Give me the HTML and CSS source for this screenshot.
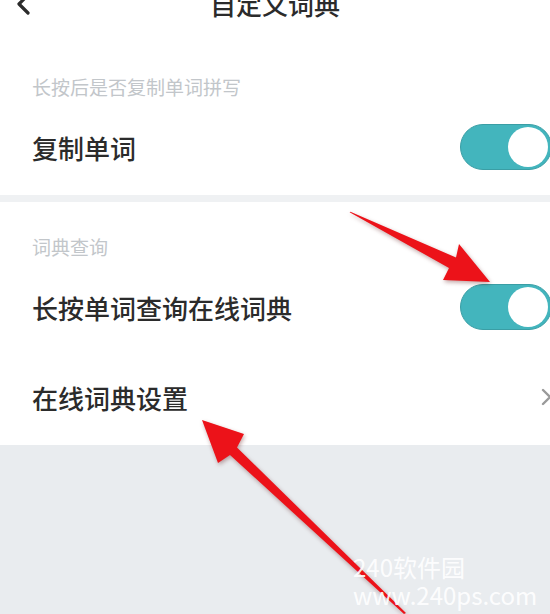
FILE: index.html
```html
<!DOCTYPE html>
<html lang="zh-CN">
<head>
    <meta charset="UTF-8">
    <meta name="viewport" content="width=device-width, initial-scale=1.0">
    <title>自定义词典</title>
    <link rel="stylesheet" href="styles.css">
</head>
<body>
    <div class="page">
        <!-- 顶部标题栏 -->
        <div class="topbar">
            <svg class="back" width="16" height="22" viewBox="0 0 16 22">
                <path d="M13 2 L4 11 L13 20" fill="none" stroke="#2b2b2b" stroke-width="3.2" stroke-linecap="round" stroke-linejoin="round"/>
            </svg>
            <div class="title">自定义词典</div>
        </div>

        <div class="group">
            <div class="group-title first">长按后是否复制单词拼写</div>
            <div class="row">
                <span class="row-text">复制单词</span>
                <span class="switch on"><span class="knob"></span></span>
            </div>
        </div>

        <div class="group">
            <div class="group-title">词典查询</div>
            <div class="row">
                <span class="row-text">长按单词查询在线词典</span>
                <span class="switch on"><span class="knob"></span></span>
            </div>
            <div class="row">
                <span class="row-text">在线词典设置</span>
                <svg class="chevron" width="12" height="20" viewBox="0 0 12 20">
                    <path d="M2 3 L9 10 L2 17" fill="none" stroke="#9a9a9a" stroke-width="2.4" stroke-linecap="round" stroke-linejoin="round"/>
                </svg>
            </div>
        </div>

        <!-- 标注箭头 -->
        <svg class="arrows" width="550" height="614" viewBox="0 0 550 614">
            <polygon fill="#ec1219" points="349.6,212.2 350.4,211.8 456,257.5 459,244 490,282 443,280 449,268"/>
            <polygon fill="#ec1219" points="202,420 244,434 237,447.5 406,613 404,614 230,455 218,463"/>
        </svg>

        <div class="watermark">
            <div>240软件园</div>
            <div>www.240ps.com</div>
        </div>
    </div>
</body>
</html>
```

FILE: styles.css
```css
html, body {
    margin: 0;
    padding: 0;
    overflow: hidden;
}

body {
    font-family: "Noto Sans CJK SC", "Noto Sans", sans-serif;
    background-color: #e9ecef;
}

.page {
    position: relative;
    width: 550px;
    height: 614px;
    overflow: hidden;
}

.topbar {
    position: relative;
    height: 56px;
    margin-top: -24px;
    background-color: #fff;
    display: flex;
    align-items: center;
    justify-content: center;
}

.back {
    position: absolute;
    left: 15px;
    top: 17px;
}

.title {
    font-size: 26px;
    font-weight: 500;
    color: #2b2b2b;
    line-height: 30px;
}

.group {
    background-color: #fff;
    padding-bottom: 3px;
}

.group + .group {
    border-top: 7px solid #eff1f3;
}

.group-title {
    padding: 30px 32px 0;
    font-size: 19px;
    line-height: 30px;
    color: #c2c6ca;
}

.group-title.first {
    padding-top: 40px;
}

.row {
    height: 90px;
    padding-left: 32px;
    display: flex;
    align-items: center;
    justify-content: space-between;
}

.row-text {
    font-size: 26px;
    font-weight: 500;
    color: #2b2b2b;
}

.switch {
    position: relative;
    width: 92px;
    height: 46px;
    margin-right: -2px;
    border-radius: 23px;
    background-color: #43b5bd;
    border: 1px solid #3a9ea5;
    box-sizing: border-box;
}

.knob {
    position: absolute;
    right: 3px;
    top: 2px;
    width: 40px;
    height: 40px;
    border-radius: 50%;
    background-color: #fff;
}

.chevron {
    margin-right: -3px;
}

.arrows {
    position: absolute;
    left: 0;
    top: 0;
    filter: drop-shadow(1px 2px 2px rgba(80, 0, 0, 0.35));
}

.watermark {
    position: absolute;
    left: 353px;
    top: 553px;
    font-size: 24px;
    line-height: 28px;
    color: rgba(255, 255, 255, 0.9);
}
```
